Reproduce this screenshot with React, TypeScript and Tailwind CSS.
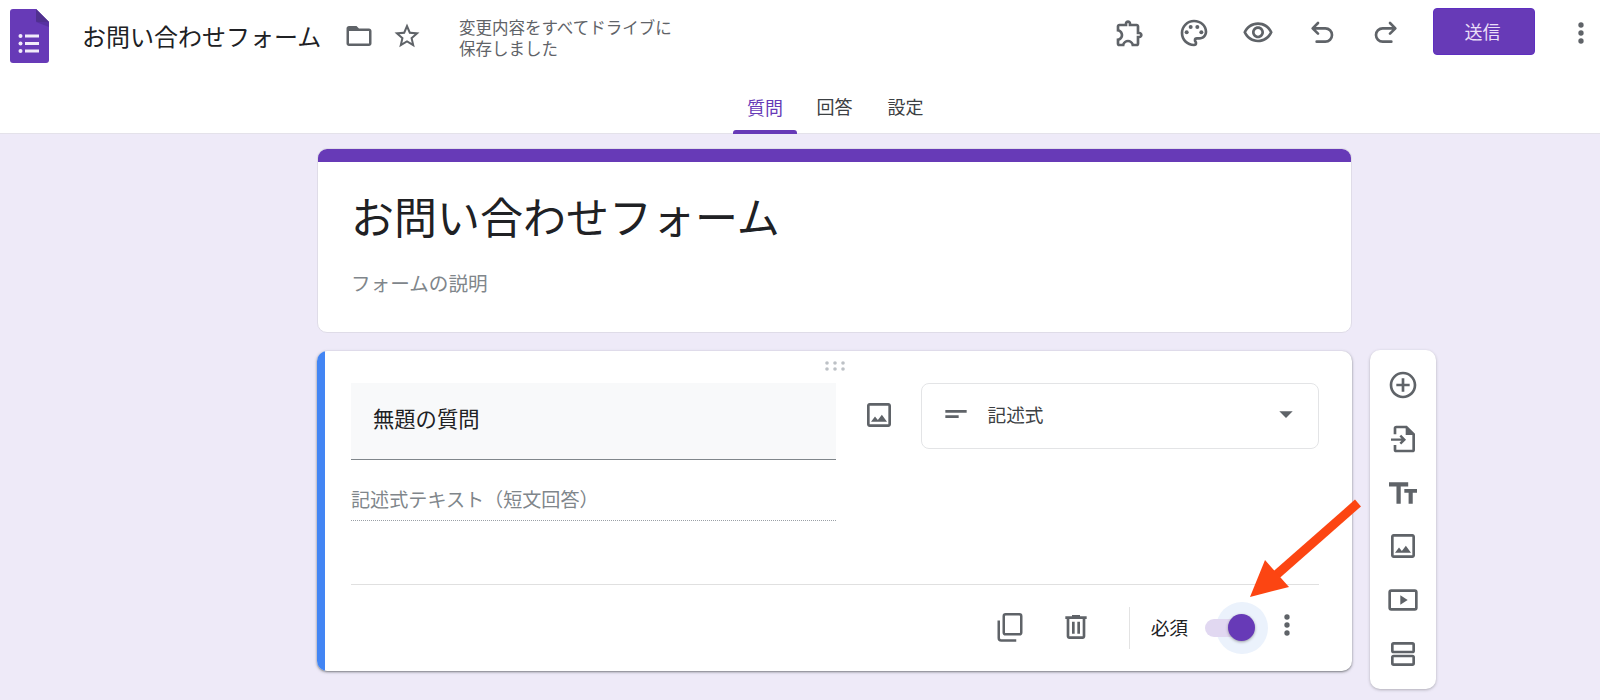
import type { ReactNode } from "react";

const FONT = "font-['Noto_Sans_CJK_JP','Noto_Sans',sans-serif]";

function Icon({ size = 32, className = "text-[#5f6368]", children }: { size?: number; className?: string; children: ReactNode }) {
  return (
    <svg width={size} height={size} viewBox="0 0 24 24" fill="currentColor" className={`shrink-0 ${className}`}>
      {children}
    </svg>
  );
}

const MoreVert = () => (
  <Icon>
    <circle cx="12" cy="6" r="2" />
    <circle cx="12" cy="12" r="2" />
    <circle cx="12" cy="18" r="2" />
  </Icon>
);

const ImageIcon = () => (
  <Icon>
    <path d="M19 5v14H5V5h14m0-2H5c-1.1 0-2 .9-2 2v14c0 1.1.9 2 2 2h14c1.1 0 2-.9 2-2V5c0-1.1-.9-2-2-2zm-4.86 8.86l-3 3.87L9 13.14 6 17h12l-3.86-5.14z" />
  </Icon>
);

function FormsLogo() {
  return (
    <svg width="39" height="54" viewBox="0 0 39 54" className="shrink-0">
      <path d="M3 0h23l13 13v38a3 3 0 0 1-3 3H3a3 3 0 0 1-3-3V3a3 3 0 0 1 3-3z" fill="#673ab7" />
      <path d="M26 0l13 13v5L26 13z" fill="#4b2a8f" opacity="0.55" />
      <path d="M26 0l13 13H28a2 2 0 0 1-2-2z" fill="#50308f" />
      <g fill="#f1ecfa">
        <circle cx="10.5" cy="27" r="2" />
        <circle cx="10.5" cy="34.5" r="2" />
        <circle cx="10.5" cy="42" r="2" />
        <rect x="15" y="25.5" width="14" height="3" />
        <rect x="15" y="33" width="14" height="3" />
        <rect x="15" y="40.5" width="14" height="3" />
      </g>
    </svg>
  );
}

function Header() {
  return (
    <header className="h-[134px] shrink-0 border-b border-[#e4e2ea] bg-white">
      <div className="flex h-[66px] items-center">
        <div className="ml-[10px] mt-[5px]">
          <FormsLogo />
        </div>
        <span className="ml-[33px] mt-[6px] w-[250px] text-[24px] leading-none text-[#202124]">お問い合わせフォーム</span>
        <span className="ml-[12px]">
          <Icon size={30} className="text-[#5f6368] mt-[5px]">
            <path d="M20 6h-8l-2-2H4c-1.1 0-1.99.9-1.99 2L2 18c0 1.1.9 2 2 2h16c1.1 0 2-.9 2-2V8c0-1.1-.9-2-2-2zm0 12H4V8h16v10z" />
          </Icon>
        </span>
        <span className="ml-[18px]">
          <Icon size={30} className="text-[#5f6368] mt-[5px]">
            <path d="M22 9.24l-7.19-.62L12 2 9.19 8.63 2 9.24l5.46 4.73L5.82 21 12 17.27 18.18 21l-1.63-7.03L22 9.24zM12 15.4l-3.76 2.27 1-4.28-3.32-2.88 4.38-.38L12 6.1l1.71 4.04 4.38.38-3.32 2.88 1 4.28L12 15.4z" />
          </Icon>
        </span>
        <div className="ml-[37px] mt-[10px] w-[220px] text-[16.5px] leading-[21.5px] text-[#5f6368]">
          <div>変更内容をすべてドライブに</div>
          <div>保存しました</div>
        </div>
        <div className="ml-auto flex items-center gap-[32px] pr-[3px]">
          <Icon>
            <path d="M10.5 4.5c.28 0 .5.22.5.5v2h6v6h2c.28 0 .5.22.5.5s-.22.5-.5.5h-2v6h-2.12c-.68-1.75-2.39-3-4.38-3s-3.7 1.25-4.38 3H4v-2.12c1.75-.68 3-2.39 3-4.38 0-1.99-1.24-3.7-2.99-4.38L4 7h6V5c0-.28.22-.5.5-.5m0-2C9.12 2.5 8 3.62 8 5H4c-1.1 0-1.99.9-1.99 2v3.8h.29c1.49 0 2.7 1.21 2.7 2.7s-1.21 2.7-2.7 2.7H2V20c0 1.1.9 2 2 2h3.8v-.3c0-1.49 1.21-2.7 2.7-2.7s2.7 1.21 2.7 2.7v.3H17c1.1 0 2-.9 2-2v-4c1.38 0 2.5-1.12 2.5-2.5S20.38 11 19 11V7c0-1.1-.9-2-2-2h-4c0-1.38-1.12-2.5-2.5-2.5z" />
          </Icon>
          <Icon>
            <path d="M12 22C6.49 22 2 17.51 2 12S6.49 2 12 2s10 4.04 10 9c0 3.31-2.69 6-6 6h-1.77c-.28 0-.5.22-.5.5 0 .12.05.23.13.33.41.47.64 1.06.64 1.67A2.5 2.5 0 0 1 12 22zm0-18c-4.41 0-8 3.59-8 8s3.59 8 8 8c.28 0 .5-.22.5-.5a.54.54 0 0 0-.14-.35c-.41-.46-.63-1.05-.63-1.65a2.5 2.5 0 0 1 2.5-2.5H16c2.21 0 4-1.79 4-4 0-3.86-3.59-7-8-7z" />
            <circle cx="6.5" cy="11.5" r="1.5" />
            <circle cx="9.5" cy="7.5" r="1.5" />
            <circle cx="14.5" cy="7.5" r="1.5" />
            <circle cx="17.5" cy="11.5" r="1.5" />
          </Icon>
          <Icon>
            <path d="M12 6c3.79 0 7.17 2.13 8.82 5.5C19.17 14.87 15.79 17 12 17s-7.17-2.13-8.82-5.5C4.83 8.13 8.21 6 12 6m0-2C7 4 2.73 7.11 1 11.5 2.73 15.89 7 19 12 19s9.27-3.11 11-7.5C21.27 7.11 17 4 12 4zm0 5c1.38 0 2.5 1.12 2.5 2.5S13.38 14 12 14s-2.5-1.12-2.5-2.5S10.62 9 12 9m0-2c-2.48 0-4.5 2.02-4.5 4.5S9.52 16 12 16s4.5-2.02 4.5-4.5S14.48 7 12 7z" />
          </Icon>
          <Icon>
            <path d="M9 4.5L5 8.5l4 4M5.5 8.5H14.5a5 5 0 0 1 0 10H8" fill="none" stroke="currentColor" strokeWidth="2" strokeLinecap="round" strokeLinejoin="round" />
          </Icon>
          <Icon>
            <path d="M15 4.5l4 4-4 4M18.5 8.5H9.5a5 5 0 0 0 0 10H16" fill="none" stroke="currentColor" strokeWidth="2" strokeLinecap="round" strokeLinejoin="round" />
          </Icon>
          <button type="button" className="-ml-[1px] -mt-[4px] mr-[1px] h-[47px] w-[102px] rounded-[4px] border border-[#5e2fc0] bg-[#673ab7] text-[18px] text-[#eadff7]">
            <span className="-ml-[3px]">送信</span>
          </button>
          <span className="-ml-[3px]">
            <MoreVert />
          </span>
        </div>
      </div>
      <nav className="flex h-[68px] items-end pl-[733px] text-[18px] text-[#3c4043]">
        <div className="flex h-full flex-col items-center justify-end">
          <span className="px-[14px] pb-[9px] text-[#673ab7]">質問</span>
          <span className="h-[4px] w-full rounded-t-[3px] bg-[#673ab7]" />
        </div>
        <span className="ml-[19.5px] pb-[14px]">回答</span>
        <span className="ml-[35px] pb-[14px]">設定</span>
      </nav>
    </header>
  );
}

function TitleCard() {
  return (
    <section className="flex h-[185px] flex-col overflow-hidden rounded-[10px] border border-[#dfdce8] bg-white">
      <div className="-mx-px -mt-px h-[14px] bg-[#673ab7]" />
      <div className="pl-[33px]">
        <h1 className="mt-[26px] text-[43px] font-normal leading-[54px] text-[#202124]">お問い合わせフォーム</h1>
        <p className="mt-[27px] text-[19.6px] leading-[28px] text-[#80868b]">フォームの説明</p>
      </div>
    </section>
  );
}

function DragDots() {
  return (
    <svg width="20" height="10" viewBox="0 0 20 10" fill="#bdc1c6">
      <circle cx="2" cy="2" r="1.8" />
      <circle cx="10" cy="2" r="1.8" />
      <circle cx="18" cy="2" r="1.8" />
      <circle cx="2" cy="8" r="1.8" />
      <circle cx="10" cy="8" r="1.8" />
      <circle cx="18" cy="8" r="1.8" />
    </svg>
  );
}

function QuestionCard() {
  return (
    <section className="flex h-[320px] overflow-hidden rounded-[10px] bg-white shadow-[0_1px_2px_rgba(60,64,67,0.55),0_1px_3px_1px_rgba(60,64,67,0.12)]">
      <div className="w-[8px] shrink-0 bg-[#4285f4]" />
      <div className="flex-1 pl-[26px] pr-[33px]">
        <div className="flex h-[32px] justify-center pt-[10px]">
          <DragDots />
        </div>
        <div className="flex h-[85px]">
          <div className="flex h-[77px] w-[485px] items-center border-b-[1.5px] border-[#80868b] bg-[#f8f9fa] pb-[6px] pl-[22px] text-[21.3px] text-[#202124]">
            無題の質問
          </div>
          <div className="flex w-[85px] items-start justify-center pt-[16px]">
            <ImageIcon />
          </div>
          <div className="flex h-[66px] flex-1 items-center rounded-[8px] border border-[#e3e4e6] pb-[4px] pl-[18px] pr-[16px]">
            <Icon>
              <path d="M4 9h16v2H4V9zm0 4h10v2H4v-2z" />
            </Icon>
            <span className="ml-[15.5px] text-[18.7px] text-[#3c4043]">記述式</span>
            <span className="ml-auto">
              <Icon>
                <path d="M7 10l5 5 5-5z" />
              </Icon>
            </span>
          </div>
        </div>
        <div className="mt-[16px] w-[485px] border-b border-dotted border-[#9aa0a6] pb-[6px] text-[19.1px] leading-[30px] text-[#80868b]">
          記述式テキスト（短文回答）
        </div>
        <div className="mt-[63px] flex h-[86px] items-center justify-end border-t border-[#e0e0e0] pr-[16px]">
          <Icon size={30}>
            <path d="M8.5 1h11A1.5 1.5 0 0 1 21 2.5v13a1.5 1.5 0 0 1-1.5 1.5h-11A1.5 1.5 0 0 1 7 15.5v-13A1.5 1.5 0 0 1 8.5 1z" fill="none" stroke="currentColor" strokeWidth="2" />
            <path d="M3 6v14a2 2 0 0 0 2 2h12" fill="none" stroke="currentColor" strokeWidth="2" />
          </Icon>
          <span className="ml-[35px] -mt-[2px]">
            <Icon size={32}>
              <path d="M15 4V3H9v1H4v2h1v13c0 1.1.9 2 2 2h10c1.1 0 2-.9 2-2V6h1V4h-5zm2 15H7V6h10v13zM9 8h2v9H9zm4 0h2v9h-2z" />
            </Icon>
          </span>
          <div className="ml-[37px] h-[42px] w-px bg-[#e3e3e3]" />
          <span className="ml-[21px] text-[18.7px] leading-none text-[#202124]">必須</span>
          <div className="relative ml-[17px] h-[52px] w-[63px]">
            <div className="absolute right-0 top-0 h-[52px] w-[52px] rounded-full bg-[#ebf2fc]" />
            <div className="absolute left-0 top-[17px] h-[18px] w-[44px] rounded-full bg-[#e1d8f1]" />
            <div className="absolute right-[13.5px] top-[12.5px] h-[27px] w-[27px] rounded-full bg-[#673ab7] shadow-[0_1px_3px_rgba(0,0,0,0.35)]" />
          </div>
          <span className="ml-[3px] -mt-[6px]">
            <MoreVert />
          </span>
        </div>
      </div>
    </section>
  );
}

function SideBar() {
  return (
    <aside className="ml-[18px] mt-[216px] flex h-[339px] w-[66px] flex-col items-center rounded-[10px] bg-white py-[8px] shadow-[0_1px_3px_rgba(60,64,67,0.35)]">
      <div className="flex h-[54px] items-center">
        <Icon>
          <path d="M13 7h-2v4H7v2h4v4h2v-4h4v-2h-4V7zm-1-5C6.48 2 2 6.48 2 12s4.48 10 10 10 10-4.48 10-10S17.52 2 12 2zm0 18c-4.41 0-8-3.59-8-8s3.59-8 8-8 8 3.59 8 8-3.59 8-8 8z" />
        </Icon>
      </div>
      <div className="flex h-[54px] items-center">
        <Icon>
          <path d="M6 8.5V4a1 1 0 0 1 1-1h7.5L20 8.5V20a1 1 0 0 1-1 1H7a1 1 0 0 1-1-1v-3.5" fill="none" stroke="currentColor" strokeWidth="2" />
          <path d="M14 3l6 6h-6z" />
          <path d="M3 12.5h10M10 9.5l3 3-3 3" fill="none" stroke="currentColor" strokeWidth="1.8" />
        </Icon>
      </div>
      <div className="flex h-[53px] items-center">
        <Icon>
          <path d="M1.5 4v3.2h5.6V20h3.2V7.2h5.6V4H1.5zm21 5h-9.5v2.8h3.2V20h3.1v-8.2h3.2V9z" />
        </Icon>
      </div>
      <div className="flex h-[54px] items-center">
        <ImageIcon />
      </div>
      <div className="flex h-[54px] items-center">
        <Icon>
          <rect x="2" y="5" width="20" height="14" rx="1.2" fill="none" stroke="currentColor" strokeWidth="2" />
          <path d="M10 8.5v7l5.5-3.5z" />
        </Icon>
      </div>
      <div className="flex h-[54px] items-center">
        <Icon>
          <rect x="4" y="4" width="16" height="6.5" rx="1" fill="none" stroke="currentColor" strokeWidth="2" />
          <rect x="4" y="13.5" width="16" height="6.5" rx="1" fill="none" stroke="currentColor" strokeWidth="2" />
        </Icon>
      </div>
    </aside>
  );
}

export default function App() {
  return (
    <div className={`relative flex h-[700px] w-[1600px] flex-col overflow-hidden bg-[#eeeaf8] ${FONT}`}>
      <Header />
      <main className="flex pl-[317px]">
        <div className="mt-[14px] flex w-[1035px] flex-col gap-[18px]">
          <TitleCard />
          <QuestionCard />
        </div>
        <SideBar />
      </main>
      {/* annotation arrow over the toggle */}
      <svg width="1600" height="700" className="pointer-events-none absolute left-0 top-0">
        <path d="M1358 503L1275 576" stroke="#fc4512" strokeWidth="9" fill="none" />
        <path d="M1250 597L1265 560L1289 587z" fill="#fc4512" />
      </svg>
    </div>
  );
}
